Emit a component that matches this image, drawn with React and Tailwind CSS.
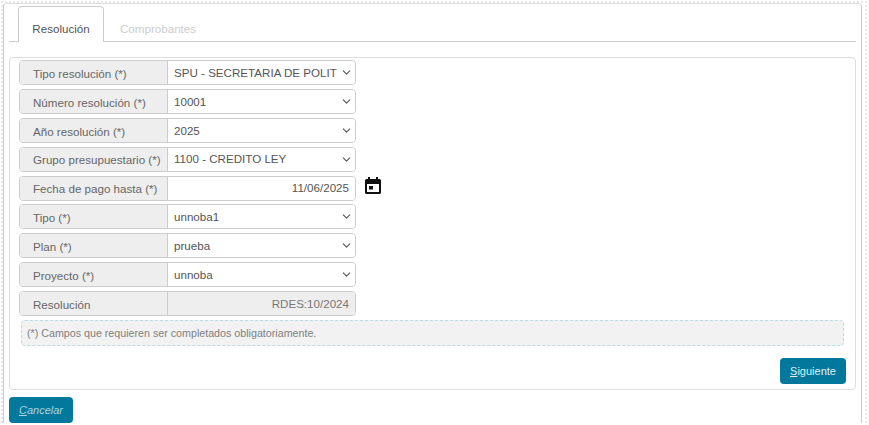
import { ChevronDown } from "lucide-react"

const filas = [
  { etiqueta: "Tipo resolución (*)", valor: "SPU - SECRETARIA DE POLIT", tipo: "select" },
  { etiqueta: "Número resolución (*)", valor: "10001", tipo: "select" },
  { etiqueta: "Año resolución (*)", valor: "2025", tipo: "select" },
  { etiqueta: "Grupo presupuestario (*)", valor: "1100 - CREDITO LEY", tipo: "select" },
  { etiqueta: "Fecha de pago hasta (*)", valor: "11/06/2025", tipo: "fecha" },
  { etiqueta: "Tipo (*)", valor: "unnoba1", tipo: "select" },
  { etiqueta: "Plan (*)", valor: "prueba", tipo: "select" },
  { etiqueta: "Proyecto (*)", valor: "unnoba", tipo: "select" },
  { etiqueta: "Resolución", valor: "RDES:10/2024", tipo: "solo" },
]

function Calendario() {
  return (
    <svg width="18" height="18" viewBox="0 0 18 18" className="ml-[8px] mb-[5px] shrink-0">
      <path
        fill="#111"
        d="M4 0h2v2h6V0h2v2h1.500A1.500 1.500 0 0 1 17 3.500v12a1.500 1.500 0 0 1-1.500 1.500h-13A1.500 1.500 0 0 1 1 15.500v-12A1.500 1.500 0 0 1 2.500 2H4zM3 7v8h12V7z"
      />
      <rect x="5" y="9" width="4" height="3.500" fill="#111" />
    </svg>
  )
}

function Fila({ etiqueta, valor, tipo }) {
  const fondo = tipo === "solo" ? "bg-[#eeeeee] text-[#777]" : "bg-white text-[#555]"
  return (
    <div className="flex items-center">
      <div className="flex h-[25px] w-[337px] shrink-0 overflow-hidden rounded-[4px] border border-[#ccc]">
        <div className="flex w-[148px] shrink-0 items-center border-r border-[#ccc] bg-[#eeeeee] pl-[13px] pt-[2px] text-[#666]">
          {etiqueta}
        </div>
        <div
          className={
            tipo === "select"
              ? `flex flex-1 items-center justify-between pl-[6px] pr-[2px] ${fondo}`
              : `flex flex-1 items-center justify-end pr-[6px] ${fondo}`
          }
        >
          <span className="whitespace-nowrap">{valor}</span>
          {tipo === "select" && <ChevronDown size={13} strokeWidth={2} className="shrink-0 text-[#555]" />}
        </div>
      </div>
      {tipo === "fecha" && <Calendario />}
    </div>
  )
}

export default function App() {
  return (
    <div className="h-[425px] w-[869px] overflow-hidden bg-white font-['Liberation_Sans',sans-serif] text-[11.6px] text-[#555]">
      <div className="ml-[1px] mt-[1px] w-[866px] border-2 border-b-0 border-dotted border-[#e8e8e8]">
        <div className="w-[859px] rounded-t-[4px] border border-b-0 border-[#ccc] border-t-[#ddd] pl-[5px] pr-[5px]">
          <div className="mt-[2px] flex h-[36px] border-b border-[#ccc] pl-[9px]">
            <div className="flex h-[36px] w-[86px] items-center justify-center rounded-t-[4px] border border-b-0 border-[#ccc] bg-white pt-[9px]">
              Resolución
            </div>
            <div className="flex h-[36px] items-center pl-[16px] pt-[10px] text-[#ccc]">Comprobantes</div>
          </div>

          <div className="mt-[15px] h-[333px] rounded-[4px] border border-[#ddd] px-[9px] pt-[2px]">
            <div className="flex flex-col gap-[3.875px]">
              {filas.map((fila) => (
                <Fila key={fila.etiqueta} {...fila} />
              ))}
            </div>
            <div className="ml-[2px] mt-[4px] flex h-[26px] w-[823px] items-center rounded-[4px] border border-dashed border-[#b5dde8] bg-[#f2f2f2] pl-[5px] text-[10.7px] text-[#808080]">
              (*) Campos que requieren ser completados obligatoriamente.
            </div>
            <div className="mt-[12px] flex justify-end">
              <button className="h-[26px] w-[66px] rounded-[4px] bg-[#02799c] text-[11px] text-[#dff1f6]">
                <span className="underline">S</span>iguiente
              </button>
            </div>
          </div>

          <button className="mt-[7px] h-[26px] w-[64px] rounded-[4px] bg-[#02799c] text-[11px] italic text-[#a9d5e2]">
            <span className="underline">C</span>ancelar
          </button>
        </div>
      </div>
    </div>
  )
}
